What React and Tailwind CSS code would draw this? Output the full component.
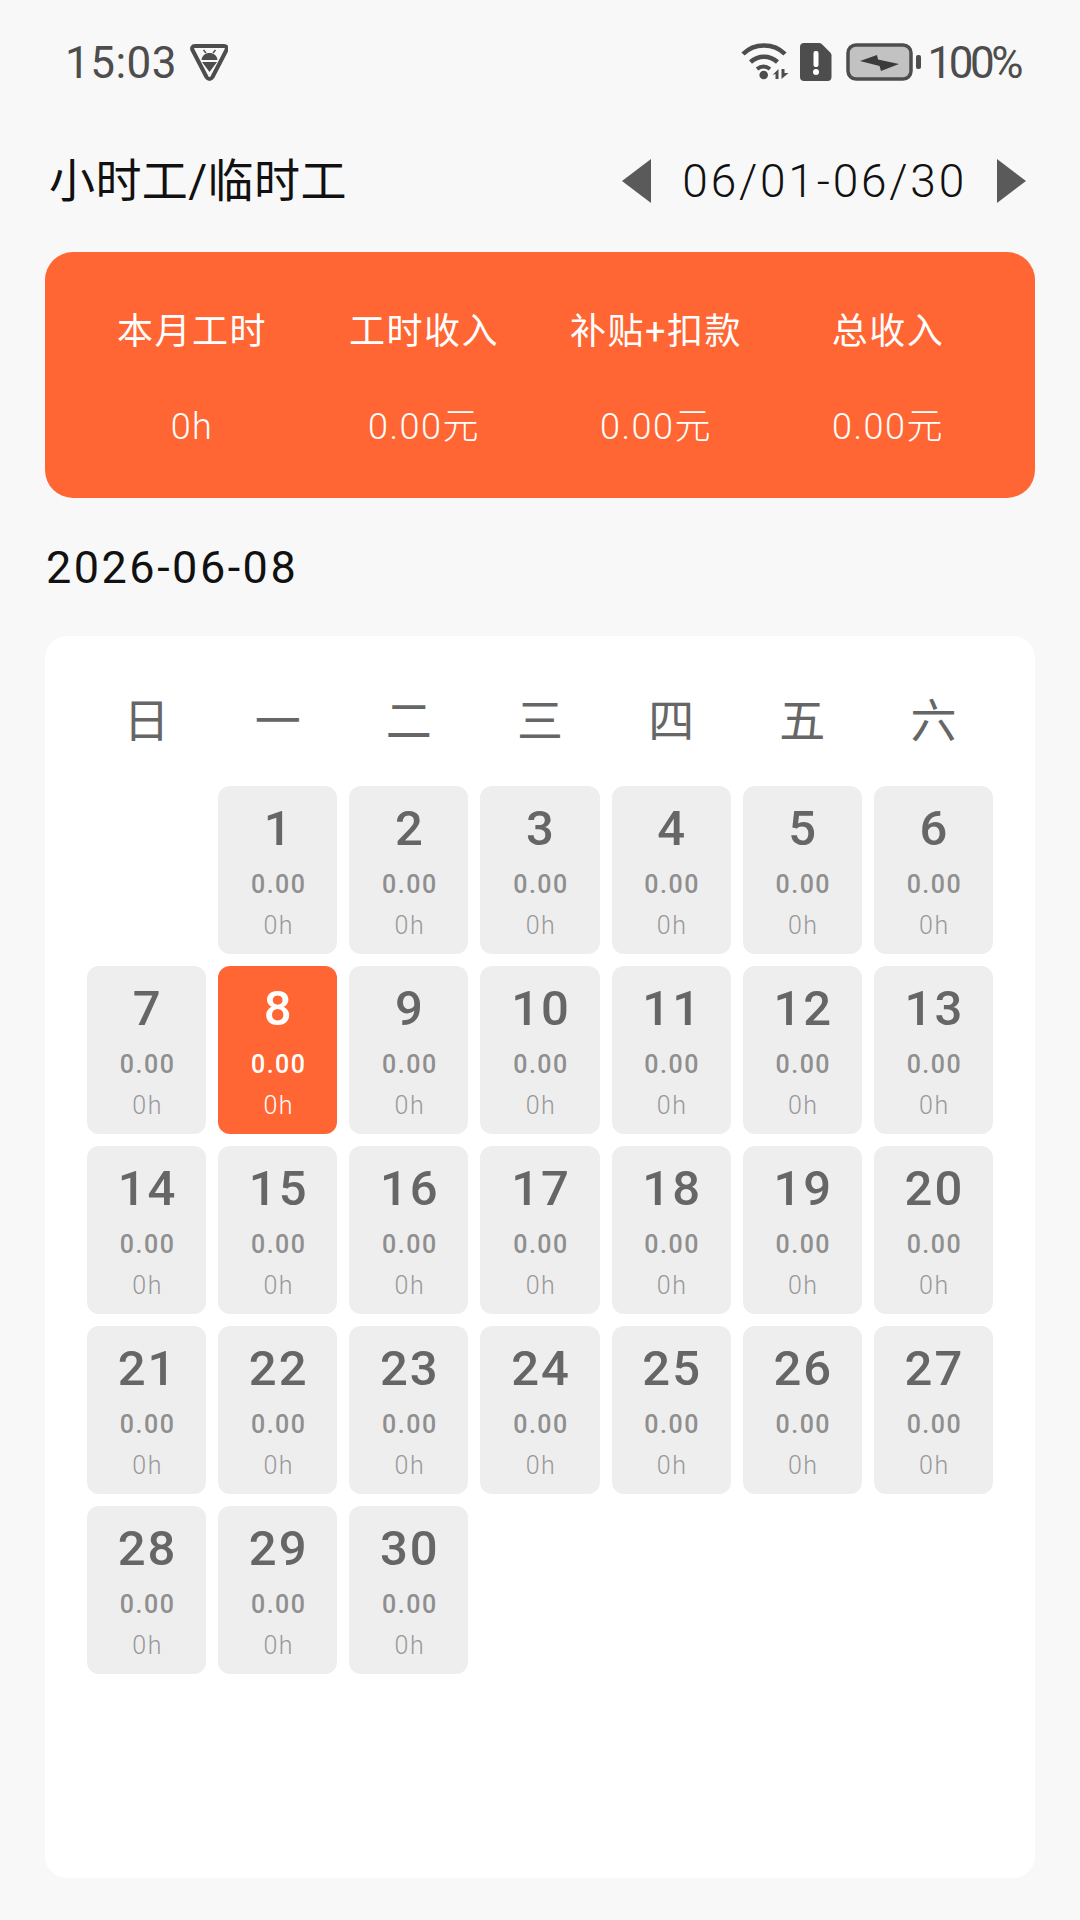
const FONT = "font-['Roboto','Noto_Sans_CJK_SC',sans-serif]";

const summary = [
  { label: "本月工时", value: "0h" },
  { label: "工时收入", value: "0.00元" },
  { label: "补贴+扣款", value: "0.00元" },
  { label: "总收入", value: "0.00元" },
];

const weekDays = ["日", "一", "二", "三", "四", "五", "六"];
const days = Array.from({ length: 30 }, (_, i) => i + 1);

function StatusBar() {
  return (
    <div className="flex h-[124px] items-center justify-between pl-[65px] pr-[60px] pt-[2px] text-[#4d4d4d]">
      <div className="flex items-center gap-[11px]">
        <span className="text-[44px] leading-none tracking-[0.5px]">15:03</span>
        <svg width="40" height="40" viewBox="0 0 40 40" className="mb-[2px]">
          <path d="M7 4h29c2.500 0 3.500 2 2.500 4L24.500 35c-1.500 2.500-4.500 2.500-6 0L4.500 8C3.500 6 4.500 4 7 4z" fill="none" stroke="#4d4d4d" strokeWidth="4" strokeLinejoin="round" />
          <path d="M13.500 18c.5-4.500 4-7 8-7s7.500 2.500 8 7z" fill="#4d4d4d" />
          <path d="M14 20h15l-7.500 10z" fill="#4d4d4d" />
          <path d="M15.500 8l2.500 3M27.500 8l-2.500 3" stroke="#4d4d4d" strokeWidth="1.500" />
        </svg>
      </div>
      <div className="flex items-center">
        <svg width="48" height="40" viewBox="0 0 48 40" className="mb-[2px] mr-[11px]">
          <path d="M2 12C13 .5 33 .5 44 12" fill="none" stroke="#4d4d4d" strokeWidth="4.500" />
          <path d="M9.500 20c8-7 19-7 27 0" fill="none" stroke="#4d4d4d" strokeWidth="4.500" />
          <path d="M16 27c4-3 9-3 13 0" fill="none" stroke="#4d4d4d" strokeWidth="4" />
          <circle cx="22.700" cy="33" r="4.300" fill="#4d4d4d" />
          <path d="M37.500 27v10h-3v-5l-3 1zM40.500 27v10l7-6h-4v-4z" fill="#4d4d4d" />
        </svg>
        <svg width="32" height="40" viewBox="0 0 32 40" className="mb-[2px] mr-[14px]">
          <path d="M4 1h15c1 0 2 .4 3 1.200l8 8c1 1 1.500 2 1.500 3V35c0 2.500-1.500 4-4 4H4c-2.500 0-4-1.500-4-4V5c0-2.500 1.500-4 4-4z" fill="#4d4d4d" />
          <rect x="13.500" y="9" width="5" height="16" rx="2" fill="#fff" />
          <circle cx="16" cy="30" r="3" fill="#fff" />
        </svg>
        <svg width="75" height="38" viewBox="0 0 75 38" className="mb-[2px] mr-[7px]">
          <rect x="2" y="2" width="63" height="34" rx="8" fill="#c2c2c2" stroke="#4d4d4d" strokeWidth="3.500" />
          <path d="M14 18l17-6 1 4.500L53 21l-18 7-1.500-5z" fill="#3b3b3b" />
          <rect x="70" y="12" width="5" height="14" rx="2" fill="#4d4d4d" />
        </svg>
        <span className="text-[44px] leading-none tracking-[-3.500px]">100%</span>
      </div>
    </div>
  );
}

function Header() {
  return (
    <div className="mt-[28px] flex h-[58px] items-center justify-between pl-[49px] pr-[54px]">
      <span className="text-[46px] leading-none tracking-[0.4px] text-[#111]">小时工/临时工</span>
      <div className="flex items-center text-[#111]">
        <svg width="29" height="44" viewBox="0 0 29 44" fill="#5a5a5a">
          <path d="M29 0v44L0 22z" />
        </svg>
        <span className="ml-[31px] mr-[30px] text-[46px] font-light leading-none tracking-[2.800px]">06/01-06/30</span>
        <svg width="29" height="44" viewBox="0 0 29 44" fill="#5a5a5a">
          <path d="M0 0v44l29-22z" />
        </svg>
      </div>
    </div>
  );
}

function SummaryCard() {
  return (
    <div className="mx-[45px] mt-[42px] grid h-[246px] grid-cols-4 rounded-[28px] bg-[#ff6633] px-[31px] pt-[60px] text-white">
      {summary.map((item) => (
        <div key={item.label} className="flex flex-col items-center">
          <span className="text-[36px] leading-[40px] tracking-[1.500px]">{item.label}</span>
          <span className="mt-[55px] text-[36px] font-light leading-[40px] tracking-[1.500px]">{item.value}</span>
        </div>
      ))}
    </div>
  );
}

function DayCell({ day }) {
  const active = day === 8;
  return (
    <div className={`flex h-[168px] flex-col items-center rounded-[12px] pl-[2px] pt-[18px] ${active ? "bg-[#ff6633] text-white" : "bg-[#efeeef] text-[#666]"}`}>
      <span className="text-[49px] font-medium leading-[50px] tracking-[2px]">{day}</span>
      <span className={`mt-[17px] text-[25px] font-medium leading-[28px] tracking-[1.500px] ${active ? "text-white" : "text-[#8f8f8f]"}`}>0.00</span>
      <span className={`mt-[13px] text-[25px] font-light leading-[28px] tracking-[1.500px] ${active ? "text-white" : "text-[#999]"}`}>0h</span>
    </div>
  );
}

function Calendar() {
  return (
    <div className="mx-[45px] mt-[44px] h-[1242px] rounded-[22px] bg-white px-[42px] pt-[60px]">
      <div className="grid grid-cols-7 gap-x-[12px] text-[#666]">
        {weekDays.map((d) => (
          <span key={d} className="text-center text-[46px] font-normal leading-[50px]">{d}</span>
        ))}
      </div>
      <div className="mt-[40px] grid grid-cols-7 gap-[12px]">
        <div />
        {days.map((day) => (
          <DayCell key={day} day={day} />
        ))}
      </div>
    </div>
  );
}

export default function App() {
  return (
    <div className={`h-[1920px] w-[1080px] overflow-hidden bg-[#f8f8f8] ${FONT}`}>
      <StatusBar />
      <Header />
      <SummaryCard />
      <div className="mt-[46px] pl-[46px] text-[45px] leading-[48px] tracking-[2.500px] text-[#111]">2026-06-08</div>
      <Calendar />
    </div>
  );
}
